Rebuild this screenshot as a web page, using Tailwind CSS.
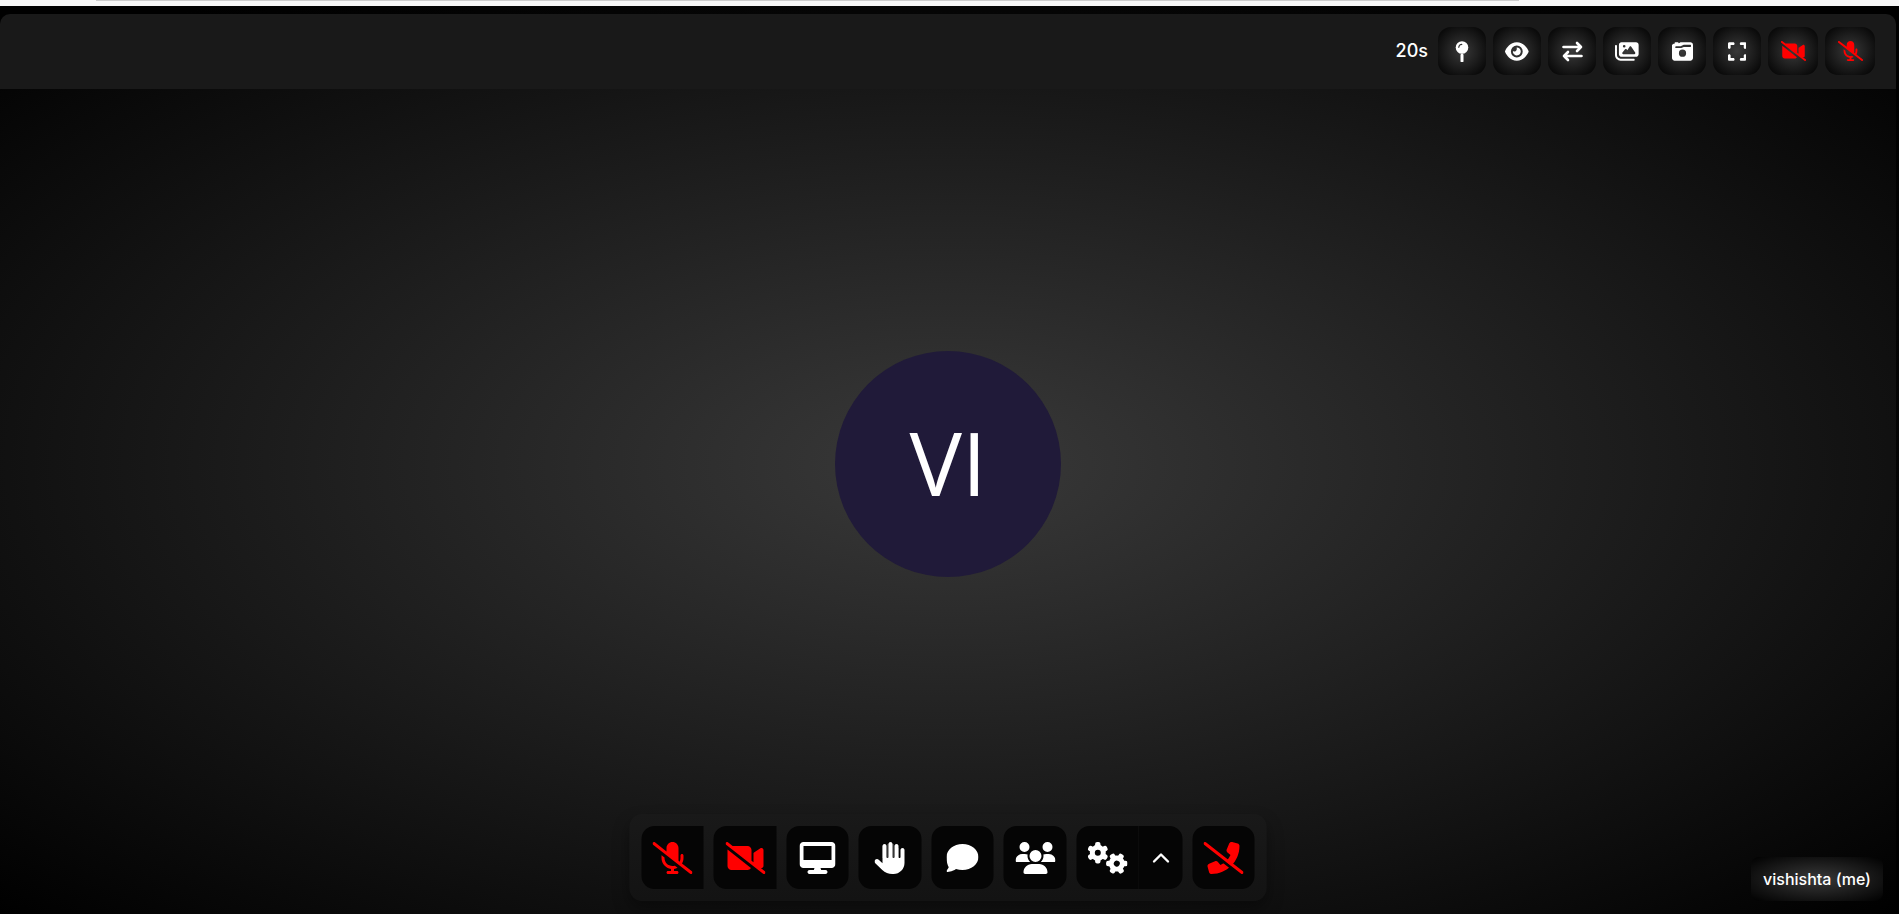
<!DOCTYPE html>
<html lang="en">
<head>
  <meta charset="UTF-8" />
  <meta name="viewport" content="width=device-width, initial-scale=1.0"/>
  <title>Meeting Room</title>
  <script src="https://cdn.jsdelivr.net/npm/@tailwindcss/browser@4"></script>
</head>
<body class="h-screen flex flex-col overflow-hidden bg-black text-white font-['Inter',sans-serif]">

  <!-- Browser edge -->
  <div class="h-[6px] shrink-0 bg-[#f7f7f7] px-24">
    <div class="h-px bg-[#cccccc] w-5/6"></div>
  </div>

  <div class="flex-1 min-h-0 flex pt-2 pr-[3px] bg-[radial-gradient(#0c0c0c,#0a0a0a_50%,#000_90%)]">
    <main class="relative flex-1 flex flex-col rounded-t-[10px] overflow-hidden bg-[radial-gradient(#393939,#000)]">

      <!-- Video tile toolbar -->
      <header class="h-[75px] shrink-0 flex items-center justify-end gap-[7px] pr-[21px] pb-px bg-[#191919]">
        <span class="text-lg font-medium mr-[3px]">20s</span>
        <button aria-label="Pin" class="size-12 rounded-[13px] flex items-center justify-center bg-[radial-gradient(#393939,#000)]">
          <svg class="h-[21px]" viewBox="0 0 14 21" fill="none"><circle cx="7" cy="6.5" r="6.3" fill="#fff"/><path d="M7 14v6" stroke="#fff" stroke-width="3" stroke-linecap="round"/><path d="M3.8 6.3A3 3 0 0 1 6.8 3.3" stroke="#333" stroke-width="1.2" stroke-linecap="round"/></svg>
        </button>
        <button aria-label="Hide me" class="size-12 rounded-[13px] flex items-center justify-center bg-[radial-gradient(#393939,#000)]">
          <svg class="h-[21px]" viewBox="0 0 576 512" fill="#fff"><path d="M288 32c-80.800 0-145.500 36.800-192.600 80.600C48.600 156 17.300 208 2.500 243.700c-3.300 7.900-3.300 16.700 0 24.600C17.300 304 48.600 356 95.400 399.400C142.500 443.200 207.200 480 288 480s145.500-36.800 192.600-80.600c46.800-43.500 78.100-95.400 93-131.100c3.300-7.900 3.300-16.700 0-24.600c-14.900-35.700-46.200-87.700-93-131.100C433.500 68.800 368.800 32 288 32zM144 256a144 144 0 1 1 288 0 144 144 0 1 1 -288 0zm144-64c0 35.300-28.700 64-64 64c-7.100 0-13.900-1.200-20.300-3.300c-5.500-1.800-11.900 1.600-11.700 7.400c.3 6.900 1.300 13.800 3.200 20.700c13.700 51.200 66.400 81.600 117.600 67.900s81.600-66.400 67.900-117.600c-11.100-41.500-47.800-69.400-88.600-71.100c-5.800-.2-9.200 6.100-7.400 11.700c2.100 6.400 3.300 13.200 3.300 20.300z"/></svg>
        </button>
        <button aria-label="Mirror" class="size-12 rounded-[13px] flex items-center justify-center bg-[radial-gradient(#393939,#000)]">
          <svg class="h-[21px]" viewBox="0 0 21 21" fill="none" stroke="#fff" stroke-width="2.600" stroke-linecap="round" stroke-linejoin="round"><path d="M1.500 6H19M15 2l4 4-4 4M19.500 15H2M6 11l-4 4 4 4"/></svg>
        </button>
        <button aria-label="Virtual background" class="size-12 rounded-[13px] flex items-center justify-center bg-[radial-gradient(#393939,#000)]">
          <svg class="h-[21px]" viewBox="0 0 576 512" fill="#fff"><path d="M160 32c-35.300 0-64 28.700-64 64V320c0 35.300 28.700 64 64 64H512c35.300 0 64-28.700 64-64V96c0-35.300-28.700-64-64-64H160zM396 138.700l96 144c4.900 7.400 5.400 16.800 1.200 24.600S480.900 320 472 320H328 280 200c-9.200 0-17.600-5.300-21.600-13.600s-2.900-18.200 2.900-25.400l64-80c4.600-5.700 11.400-9 18.700-9s14.200 3.300 18.700 9l17.300 21.600 56-84C360.500 132 368 128 376 128s15.500 4 20 10.700zM192 128a32 32 0 1 1 64 0 32 32 0 1 1 -64 0zM48 120c0-13.300-10.700-24-24-24S0 106.700 0 120V344c0 75.100 60.900 136 136 136H456c13.300 0 24-10.700 24-24s-10.700-24-24-24H136c-48.600 0-88-39.400-88-88V120z"/></svg>
        </button>
        <button aria-label="Snapshot" class="size-12 rounded-[13px] flex items-center justify-center bg-[radial-gradient(#393939,#000)]">
          <svg class="h-[21px]" viewBox="0 0 512 512" fill="#fff" fill-rule="evenodd"><path d="M0 104V416c0 35.300 28.700 64 64 64H448c35.300 0 64-28.700 64-64V96c0-35.300-28.700-64-64-64H220.600c-10.600 0-21.100 2.700-30.500 7.700L160 56V48c0-9-7-16-16-16H80c-9 0-16 7-16 16V64C30 64 0 76 0 104zM96 128H208l80-34c6-3 12-4 18-4H440c13 0 24 10 24 24v16c0 9-7 16-16 16H288l-60 22c-6 3-12 4-18 4H96c-9 0-16-7-16-16v-12c0-9 7-16 16-16zM256 208a88 88 0 1 1 0 176 88 88 0 1 1 0-176z"/></svg>
        </button>
        <button aria-label="Full screen" class="size-12 rounded-[13px] flex items-center justify-center bg-[radial-gradient(#393939,#000)]">
          <svg class="h-[21px]" viewBox="0 0 448 512" fill="#fff"><path d="M32 32C14.300 32 0 46.300 0 64v96c0 17.700 14.300 32 32 32s32-14.300 32-32V96h64c17.700 0 32-14.300 32-32s-14.300-32-32-32H32zM64 352c0-17.700-14.300-32-32-32s-32 14.300-32 32v96c0 17.700 14.300 32 32 32h96c17.700 0 32-14.300 32-32s-14.300-32-32-32H64V352zM320 32c-17.700 0-32 14.300-32 32s14.300 32 32 32h64v64c0 17.700 14.300 32 32 32s32-14.300 32-32V64c0-17.700-14.300-32-32-32H320zM448 352c0-17.700-14.300-32-32-32s-32 14.300-32 32v64H320c-17.700 0-32 14.300-32 32s14.300 32 32 32h96c17.700 0 32-14.300 32-32V352z"/></svg>
        </button>
        <button aria-label="Camera off" class="w-[50px] h-12 rounded-[13px] flex items-center justify-center bg-[radial-gradient(#393939,#000)]">
          <svg class="h-5" viewBox="0 0 640 512" fill="#f00"><path d="M38.800 5.100C28.400-3.100 13.300-1.200 5.100 9.200S-1.200 34.700 9.200 42.900l592 464c10.400 8.200 25.500 6.300 33.700-4.100s6.300-25.500-4.100-33.700l-86.400-67.700 13.800 9.200c9.800 6.500 22.400 7.200 32.900 1.600s16.900-16.400 16.900-28.200V128c0-11.800-6.500-22.600-16.900-28.200s-23-5-32.900 1.600l-96 64L448 174.900V192 320l0 5.800-32-25.100V128c0-35.300-28.700-64-64-64H113.900L38.800 5.100zM407 416.700L32.300 121.500c-.2 2.100-.3 4.300-.3 6.500V384c0 35.300 28.700 64 64 64H352c23.400 0 43.900-12.600 55-31.300z"/></svg>
        </button>
        <button aria-label="Microphone off" class="w-[50px] h-12 rounded-[13px] flex items-center justify-center bg-[radial-gradient(#393939,#000)]">
          <svg class="h-5" viewBox="0 0 640 512" fill="#f00"><path d="M38.800 5.100C28.400-3.100 13.300-1.200 5.100 9.200S-1.200 34.700 9.200 42.900l592 464c10.400 8.200 25.500 6.300 33.700-4.100s6.300-25.500-4.100-33.700L472.100 344.700c15.200-26 23.900-56.300 23.900-88.700V216c0-13.300-10.700-24-24-24s-24 10.700-24 24v40c0 21.200-5.100 41.100-14.200 58.700L416 300.800V96c0-53-43-96-96-96s-96 43-96 96v54.300L38.800 5.100zM344 430.400c20.400-2.800 39.700-9.100 57.300-18.200l-43.100-33.900C346.100 382 333.300 384 320 384c-70.700 0-128-57.300-128-128v-8.700L144.700 210c-.5 1.900-.7 3.900-.7 6v40c0 89.100 66.200 162.700 152 174.400V464H248c-13.300 0-24 10.700-24 24s10.700 24 24 24h72 72c13.300 0 24-10.700 24-24s-10.700-24-24-24H344V430.400z"/></svg>
        </button>
      </header>

      <!-- Avatar, centered on the whole tile -->
      <div class="absolute inset-0 flex items-center justify-center pointer-events-none">
        <div class="size-[226px] rounded-full bg-[#201a39] flex items-center justify-center pb-1 text-[88px] leading-none font-['Open_Sans',sans-serif]">VI</div>
      </div>

      <!-- Bottom controls -->
      <nav class="absolute bottom-[13px] left-1/2 -translate-x-1/2 h-[87px] flex items-center gap-[10px] px-3 rounded-[13px] bg-linear-to-b from-[#191919] to-[#131313] shadow-[0_8px_16px_rgba(0,0,0,0.37)]">
        <button aria-label="Start audio" class="w-[62px] h-[63px] rounded-l-[13px] bg-[#050505] flex items-center justify-center">
          <svg class="h-8" viewBox="0 0 640 512" fill="#f00"><path d="M38.800 5.100C28.400-3.100 13.300-1.200 5.100 9.200S-1.200 34.700 9.200 42.900l592 464c10.400 8.200 25.500 6.300 33.700-4.100s6.300-25.500-4.100-33.700L472.100 344.700c15.200-26 23.900-56.300 23.900-88.700V216c0-13.300-10.700-24-24-24s-24 10.700-24 24v40c0 21.200-5.100 41.100-14.200 58.700L416 300.800V96c0-53-43-96-96-96s-96 43-96 96v54.300L38.800 5.100zM344 430.400c20.400-2.800 39.700-9.100 57.300-18.200l-43.100-33.900C346.100 382 333.300 384 320 384c-70.700 0-128-57.300-128-128v-8.700L144.700 210c-.5 1.900-.7 3.900-.7 6v40c0 89.100 66.200 162.700 152 174.400V464H248c-13.300 0-24 10.700-24 24s10.700 24 24 24h72 72c13.300 0 24-10.700 24-24s-10.700-24-24-24H344V430.400z"/></svg>
        </button>
        <button aria-label="Start video" class="w-[63px] h-[63px] rounded-l-[13px] bg-[#050505] flex items-center justify-center">
          <svg class="h-8" viewBox="0 0 640 512" fill="#f00"><path d="M38.800 5.100C28.400-3.100 13.300-1.200 5.100 9.200S-1.200 34.700 9.200 42.900l592 464c10.400 8.200 25.500 6.300 33.700-4.100s6.300-25.500-4.100-33.700l-86.400-67.700 13.800 9.200c9.800 6.500 22.400 7.200 32.900 1.600s16.900-16.400 16.900-28.200V128c0-11.800-6.500-22.600-16.900-28.200s-23-5-32.900 1.600l-96 64L448 174.900V192 320l0 5.800-32-25.100V128c0-35.300-28.700-64-64-64H113.900L38.800 5.100zM407 416.700L32.300 121.500c-.2 2.100-.3 4.300-.3 6.500V384c0 35.300 28.700 64 64 64H352c23.400 0 43.900-12.600 55-31.300z"/></svg>
        </button>
        <button aria-label="Share screen" class="w-[62px] h-[63px] rounded-[13px] bg-[#050505] flex items-center justify-center">
          <svg class="h-8" viewBox="0 0 576 512" fill="#fff"><path d="M64 0C28.700 0 0 28.700 0 64V352c0 35.300 28.700 64 64 64H240l-10.700 32H160c-17.700 0-32 14.300-32 32s14.300 32 32 32H416c17.700 0 32-14.300 32-32s-14.300-32-32-32H346.700L336 416H512c35.300 0 64-28.700 64-64V64c0-35.300-28.700-64-64-64H64zM512 64V288H64V64H512z"/></svg>
        </button>
        <button aria-label="Raise hand" class="w-[63px] h-[63px] rounded-[13px] bg-[#050505] flex items-center justify-center">
          <svg class="h-8" viewBox="0 0 512 512" fill="#fff"><path d="M208 32h16v224h-16zM128 64h16v192h-16zM288 32h16v224h-16zM368 96h16v160h-16z" fill="#666"/><path d="M288 32c0-17.700-14.300-32-32-32s-32 14.300-32 32V240c0 8.800-7.200 16-16 16s-16-7.200-16-16V64c0-17.700-14.300-32-32-32s-32 14.300-32 32V336c0 1.500 0 3.100 .1 4.600L67.600 283c-16-15.200-41.300-14.600-56.600 1.400s-14.600 41.300 1.400 56.600L124.800 448c43.100 41.100 100.400 64 160 64H304c97.200 0 176-78.800 176-176V128c0-17.700-14.300-32-32-32s-32 14.300-32 32V240c0 8.800-7.200 16-16 16s-16-7.200-16-16V64c0-17.700-14.300-32-32-32s-32 14.300-32 32V240c0 8.800-7.200 16-16 16s-16-7.200-16-16V32z"/></svg>
        </button>
        <button aria-label="Chat" class="w-[62px] h-[63px] rounded-[13px] bg-[#050505] flex items-center justify-center">
          <svg class="h-8" viewBox="0 0 512 512" fill="#fff"><path d="M512 240c0 114.900-114.600 208-256 208c-37.100 0-72.300-6.400-104.100-17.900c-11.900 8.700-31.300 20.600-54.300 30.600C73.600 471.100 44.700 480 16 480c-6.500 0-12.300-3.900-14.800-9.900s-1.100-12.800 3.400-17.400c.4-.4 1-1.100 1.900-2.100c1.800-2 4.400-5.200 7.700-9.400c6.500-8.500 14.600-20.800 21.500-36C17.700 373 0 318 0 240C0 125.100 114.600 32 256 32s256 93.100 256 208z"/></svg>
        </button>
        <button aria-label="Participants" class="w-[63px] h-[63px] rounded-[13px] bg-[#050505] flex items-center justify-center">
          <svg class="h-8" viewBox="0 0 640 512" fill="#fff"><path d="M144 0a80 80 0 1 1 0 160A80 80 0 1 1 144 0zM512 0a80 80 0 1 1 0 160A80 80 0 1 1 512 0zM0 298.700C0 239.800 47.800 192 106.700 192h42.700c15.900 0 31 3.500 44.600 9.700c-1.300 7.200-1.900 14.700-1.900 22.300c0 38.200 16.800 72.500 43.300 96c-.2 0-.4 0-.7 0H21.300C9.600 320 0 310.400 0 298.700zM405.300 320c-.2 0-.4 0-.7 0c26.600-23.500 43.300-57.800 43.300-96c0-7.600-.7-15-1.900-22.300c13.600-6.300 28.700-9.700 44.600-9.700h42.700C592.200 192 640 239.800 640 298.700c0 11.800-9.600 21.300-21.300 21.300H405.300zM224 224a96 96 0 1 1 192 0 96 96 0 1 1 -192 0zM128 485.300C128 411.700 187.700 352 261.300 352H378.700C452.300 352 512 411.700 512 485.300c0 14.700-11.900 26.700-26.700 26.700H154.700c-14.700 0-26.700-11.900-26.700-26.700z"/></svg>
        </button>
        <div class="flex">
          <button aria-label="Settings" class="w-[62px] h-[63px] rounded-l-[13px] bg-[#050505] border-r border-[#080808] flex items-center justify-center">
            <svg class="h-8" viewBox="0 0 40 32">
              <defs>
                <g id="gear" fill="none" stroke="#fff">
                  <circle r="5.5" stroke-width="5"/>
                  <path stroke-width="4" stroke-linejoin="round" stroke-linecap="round" d="M-.7-6.500V-8.700H.7V-6.500M-.7 6.500V8.700H.7V6.500M5.300-3.900 7.200-5 7.900-3.700 6-2.600M5.300 3.900 7.200 5 7.900 3.700 6 2.600M-5.300-3.900-7.200-5-7.900-3.700-6-2.600M-5.300 3.900-7.200 5-7.900 3.700-6 2.600"/>
                </g>
              </defs>
              <use href="#gear" transform="translate(10.300 10.800)"/>
              <use href="#gear" transform="translate(29.300 21.600) rotate(30)"/>
            </svg>
          </button>
          <button aria-label="More settings" class="w-[44px] h-[63px] rounded-r-[13px] bg-[#050505] flex items-center justify-center">
            <svg class="h-[10px]" viewBox="0 0 17 10" fill="none" stroke="#fff" stroke-width="2.400" stroke-linecap="round" stroke-linejoin="round"><path d="M1.500 8.500l7-7 7 7"/></svg>
          </button>
        </div>
        <button aria-label="Leave room" class="w-[62px] h-[63px] rounded-[13px] bg-[#050505] flex items-center justify-center">
          <svg class="h-8" viewBox="0 0 640 512" fill="#f00"><path d="M228.900 24.600c-7.700-18.600-28-28.500-47.400-23.200l-88 24C76.100 30.200 64 46 64 64c0 247.400 200.600 448 448 448c18 0 33.800-12.100 38.600-29.500l24-88c5.300-19.400-4.600-39.700-23.200-47.400l-96-40c-16.300-6.800-35.200-2.100-46.300 11.600L368.700 368c-70.400-33.300-127.400-90.300-160.700-160.700l49.300-40.300c13.700-11.200 18.400-30 11.600-46.300l-40-96z" transform="matrix(-1 0 0 1 640 0)"/><path d="M-3 59 589 523" stroke="#050505" stroke-width="48"/><path d="M24 24 616 488" stroke="#f00" stroke-width="48" stroke-linecap="round"/></svg>
        </button>
      </nav>

      <!-- Peer name -->
      <div class="absolute bottom-[13px] right-[13px] h-[44px] px-3 flex items-center rounded-lg bg-[radial-gradient(#393939,#000)] text-base font-medium">vishishta (me)</div>
    </main>
  </div>

</body>
</html>
